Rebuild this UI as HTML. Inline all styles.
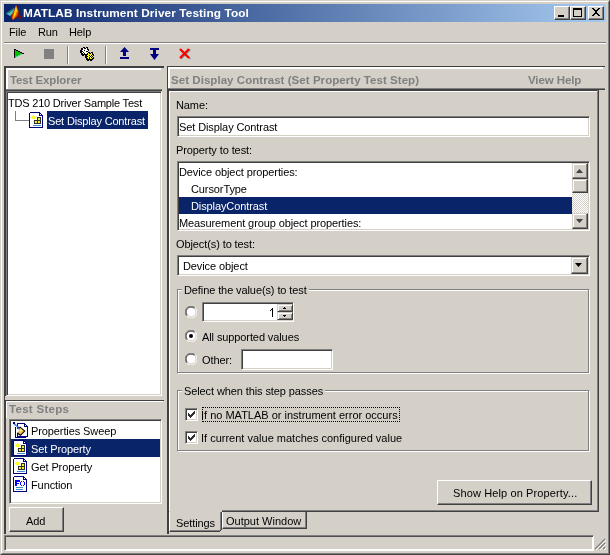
<!DOCTYPE html>
<html><head><meta charset="utf-8">
<style>
*{box-sizing:border-box}
html,body{margin:0;padding:0}
body{width:610px;height:555px;overflow:hidden;background:#d4d0c8;position:relative;font-family:"Liberation Sans",sans-serif;font-size:11px;color:#000}
.a{position:absolute}
.t{position:absolute;white-space:nowrap;line-height:13px;font-size:11px;letter-spacing:-0.1px}
.b{font-weight:bold}
.g{color:#808080}
.sunk{position:absolute;background:#fff;border:1px solid;border-color:#808080 #fff #fff #808080;box-shadow:inset 1px 1px 0 #404040,inset -1px -1px 0 #d4d0c8}
.rais{position:absolute;background:#d4d0c8;border:1px solid;border-color:#fff #404040 #404040 #fff;box-shadow:inset -1px -1px 0 #808080}
.etch{position:absolute;border:1px solid;border-color:#808080 #fff #fff #808080;box-shadow:inset -1px -1px 0 #808080,inset 1px 1px 0 #fff}
.sel{position:absolute;background:#0a246a}
.w{color:#fff}
.nolcd{will-change:transform}
</style></head><body><div class="nolcd" style="position:absolute;left:0;top:0;width:610px;height:555px">

<!-- window frame -->
<div class="a" style="left:0;top:0;width:610px;height:555px;border:1px solid;border-color:#d4d0c8 #404040 #404040 #d4d0c8"></div>
<div class="a" style="left:1px;top:1px;width:608px;height:553px;border:1px solid;border-color:#fff #808080 #808080 #fff"></div>

<!-- title bar -->
<div class="a" style="left:4px;top:4px;width:602px;height:18px;background:linear-gradient(to right,#0a246a,#a6caf0)"></div>
<svg class="a" style="left:6px;top:5px" width="16" height="16" viewBox="0 0 16 16">
  <polygon points="0,8.5 8,3 9.5,6.5 4,11" fill="#50c0b8"/>
  <polygon points="0,8.5 8,3 8.6,4.2 1.2,9" fill="#207878"/>
  <polygon points="10,0 15.5,14 11.5,11.5 6.5,15 5,11 8.5,4.5" fill="#b82000"/>
  <polygon points="10,0 12.5,6.5 10.5,11 7,15 6,12.5 8.5,5.5" fill="#f06000"/>
  <polygon points="10,1 11.2,5.5 9.5,10 7,14.5 8,8.5" fill="#ffd800"/>
  <polygon points="12.5,6.5 15.5,14 16,15 12,12" fill="#701000"/>
</svg>
<div class="t b w" style="left:23px;top:7px;font-size:11.8px;letter-spacing:0.1px">MATLAB Instrument Driver Testing Tool</div>

<!-- caption buttons -->
<div class="rais" style="left:554px;top:6px;width:16px;height:14px"></div>
<div class="a" style="left:558px;top:15px;width:6px;height:2px;background:#000"></div>
<div class="rais" style="left:570px;top:6px;width:16px;height:14px"></div>
<div class="a" style="left:573px;top:8px;width:9px;height:9px;border:1px solid #000;border-top-width:2px"></div>
<div class="rais" style="left:588px;top:6px;width:16px;height:14px"></div>
<svg class="a" style="left:588px;top:5px" width="16" height="14" viewBox="0 0 16 14">
  <path d="M4,3h2v1h1v1h2v-1h1v-1h2v1h-1v1h-1v1h-1v2h1v1h1v1h1v1h-2v-1h-1v-1h-2v1h-1v1h-2v-1h1v-1h1v-1h1v-2h-1v-1h-1v-1h-1z" fill="#000"/>
</svg>

<!-- menu -->
<div class="t" style="left:9px;top:26px">File</div>
<div class="t" style="left:38px;top:26px">Run</div>
<div class="t" style="left:69px;top:26px">Help</div>
<div class="a" style="left:4px;top:42px;width:602px;height:1px;background:#808080"></div>
<div class="a" style="left:4px;top:43px;width:602px;height:1px;background:#fff"></div>

<!-- toolbar -->
<svg class="a" style="left:14px;top:49px" width="10" height="9" viewBox="0 0 10 9" shape-rendering="crispEdges">
  <path d="M0,0h2v1h-1v8h-1z M2,1h2v1h-2z M4,2h2v1h-2z M6,3h2v1h-2z M8,4h2v1h-2z" fill="#000"/>
  <path d="M1,1h1v1h2v1h2v1h2v1h-2v1h-2v1h-2v1h-1z" fill="#00c000"/>
  <path d="M6,5h2v1h-2z M4,6h2v1h-2z M2,7h2v1h-2z M1,8h1v1h-1z" fill="#30e890"/>
</svg>
<div class="a" style="left:44px;top:49px;width:10px;height:10px;background:#808080"></div>
<div class="a" style="left:67px;top:46px;width:1px;height:18px;background:#808080"></div>
<div class="a" style="left:68px;top:46px;width:1px;height:18px;background:#fff"></div>
<svg class="a" style="left:78px;top:45px" width="19" height="18" viewBox="0 0 19 18" shape-rendering="crispEdges">
  <path d="M5,2h2v1h1v-1h2v2h1v2h-1v1h1v2h-1v1h-1v1h-2v-1h-1v1h-2v-1h-1v-2h-1v-3h1v-2h2z" fill="#000"/>
  <path d="M5,3h1v1h2v-1h1v2h1v1h-1v1h1v1h-1v1h-2v-1h-1v1h-1v-1h-1v-1h1v-1h-1v-1h1z" fill="#fff"/>
  <path d="M6,5h1v1h-1z M8,6h1v1h-1z M5,7h1v1h-1z" fill="#000"/>
  <path d="M10,7h2v1h1v-1h2v2h1v2h-1v1h1v2h-1v1h-1v1h-2v-1h-1v1h-2v-1h-1v-2h-1v-2h1v-2h2z" fill="#000"/>
  <path d="M10,8h1v1h2v-1h1v2h1v1h-1v1h1v1h-1v1h-2v-1h-1v1h-1v-1h-1v-1h1v-1h-1v-1h1z" fill="#ffff00"/>
  <path d="M11,10h1v1h-1z M13,10h1v1h-1z M12,11h1v1h-1z M11,12h1v1h-1z M13,12h1v1h-1z" fill="#000"/>
  <path d="M12,10h1v1h-1z M12,12h1v1h-1z" fill="#fff"/>
</svg>
<div class="a" style="left:105px;top:46px;width:1px;height:18px;background:#808080"></div>
<div class="a" style="left:106px;top:46px;width:1px;height:18px;background:#fff"></div>
<svg class="a" style="left:120px;top:47px" width="9" height="12" viewBox="0 0 9 12">
  <polygon points="4.5,0 9,5 6,5 6,9 3,9 3,5 0,5" fill="#000080"/>
  <rect x="0" y="10" width="9" height="2" fill="#000080"/>
</svg>
<svg class="a" style="left:150px;top:48px" width="9" height="13" viewBox="0 0 9 13">
  <rect x="0" y="0" width="9" height="2" fill="#000080"/>
  <polygon points="3,2 6,2 6,6 9,6 4.5,12 0,6 3,6" fill="#000080"/>
</svg>
<svg class="a" style="left:178px;top:47px" width="14" height="14" viewBox="0 0 14 14">
  <path d="M3,2.5 L12.5,12 M12.5,2.5 L3,12" stroke="#709090" stroke-width="1.2"/>
  <path d="M2,1.5 L11,10.5 M11,1.5 L2,10.5" stroke="#ff0000" stroke-width="2.3" transform="translate(0,0.5)"/>
</svg>

<!-- LEFT COLUMN -->
<div class="a" style="left:4px;top:66px;width:2px;height:330px;background:#404040"></div>
<div class="a" style="left:4px;top:396px;width:1px;height:138px;background:#404040"></div>
<!-- test explorer header -->
<div class="a" style="left:4px;top:66px;width:160px;height:2px;background:#404040"></div>
<div class="a" style="left:6px;top:68px;width:155px;height:2px;background:#fff"></div>
<div class="a" style="left:6px;top:68px;width:2px;height:21px;background:#fff"></div>
<div class="t b g" style="left:10px;top:74px;font-size:11.5px">Test Explorer</div>
<!-- tree pane -->
<div class="a" style="left:6px;top:89px;width:156px;height:1px;background:#808080"></div>
<div class="a" style="left:6px;top:90px;width:156px;height:1px;background:#404040"></div>
<div class="sunk" style="left:6px;top:91px;width:156px;height:305px"></div>
<div class="t" style="left:8px;top:97px;letter-spacing:-0.2px">TDS 210 Driver Sample Test</div>
<div class="a" style="left:15px;top:111px;width:1px;height:10px;background:#808080"></div>
<div class="a" style="left:15px;top:120px;width:14px;height:1px;background:#808080"></div>
<svg class="a" style="left:29px;top:112px" width="15" height="17" viewBox="0 0 15 17" shape-rendering="crispEdges">
  <path d="M1,1 H10 L13,4 V16 H1 Z" fill="#fff"/>
  <path d="M0.5,0.5 H10.5 M10.5,0.5 L13.5,3.5 M13.5,3.5 V15.5 H0.5 V0.5" fill="none" stroke="#000080" stroke-width="1.3"/>
  <path d="M10.5,0.5 V3.5 H13.5" fill="none" stroke="#000080" stroke-width="1"/>
    <path d="M4,3h1v1h1v1h1v1h-1v1h-1v1h-1v-1h-1v-1h-1v-1h1v-1h1z" fill="#ffff20"/>
  <path d="M8,5h4v7h-7v-4h3z" fill="#303030"/>
  <rect x="9" y="6" width="2" height="2" fill="#f0f030"/>
  <rect x="6" y="9" width="2" height="2" fill="#f0f030"/>
  <rect x="9" y="9" width="2" height="2" fill="#f0f030"/>
  <rect x="4" y="13" width="8" height="1" fill="#3a90c8"/>
</svg>
<div class="sel" style="left:47px;top:111px;width:101px;height:18px"></div>
<div class="t w" style="left:48px;top:115px;letter-spacing:-0.17px">Set Display Contrast</div>

<!-- test steps -->
<div class="a" style="left:4px;top:400px;width:160px;height:1px;background:#404040"></div>
<div class="a" style="left:6px;top:401px;width:157px;height:1px;background:#fff"></div>
<div class="a" style="left:5px;top:400px;width:1px;height:134px;background:#404040"></div>
<div class="a" style="left:6px;top:401px;width:1px;height:17px;background:#fff"></div>
<div class="t b g" style="left:9px;top:403px;font-size:11.5px;letter-spacing:0.3px">Test Steps</div>
<div class="sunk" style="left:9px;top:419px;width:153px;height:85px"></div>
<div class="sel" style="left:11px;top:439px;width:149px;height:18px"></div>
<div class="t" style="left:31px;top:425px">Properties Sweep</div>
<div class="t w" style="left:31px;top:443px">Set Property</div>
<div class="t" style="left:31px;top:461px">Get Property</div>
<div class="t" style="left:31px;top:479px">Function</div>
<div class="rais" style="left:9px;top:507px;width:55px;height:25px"></div>
<div class="t" style="left:26px;top:515px">Add</div>

<!-- RIGHT PANEL -->
<div class="a" style="left:167px;top:66px;width:1px;height:468px;background:#404040"></div>
<div class="a" style="left:167px;top:66px;width:438px;height:1px;background:#404040"></div>
<div class="a" style="left:168px;top:67px;width:435px;height:2px;background:#fff"></div>
<div class="a" style="left:168px;top:67px;width:2px;height:21px;background:#fff"></div>
<div class="a" style="left:168px;top:88px;width:437px;height:1px;background:#808080"></div>
<div class="a" style="left:167px;top:89px;width:438px;height:1px;background:#404040"></div>
<div class="t b g" style="left:171px;top:74px;font-size:11.5px;letter-spacing:0.05px">Set Display Contrast (Set Property Test Step)</div>
<div class="t b g" style="left:528px;top:74px;font-size:11.5px">View Help</div>
<!-- tab content border -->
<div class="a" style="left:168px;top:90px;width:1px;height:444px;background:#404040"></div>
<div class="a" style="left:169px;top:91px;width:1px;height:420px;background:#fff"></div>
<div class="a" style="left:168px;top:90px;width:430px;height:1px;background:#404040"></div>
<div class="a" style="left:169px;top:91px;width:428px;height:1px;background:#fff"></div>
<div class="a" style="left:597px;top:90px;width:1px;height:421px;background:#808080"></div>
<div class="a" style="left:598px;top:90px;width:1px;height:422px;background:#404040"></div>
<div class="a" style="left:222px;top:510px;width:376px;height:1px;background:#808080"></div>
<div class="a" style="left:222px;top:511px;width:377px;height:1px;background:#404040"></div>

<div class="t" style="left:176px;top:99px">Name:</div>
<div class="sunk" style="left:177px;top:116px;width:413px;height:21px"></div>
<div class="t" style="left:179px;top:121px">Set Display Contrast</div>

<div class="t" style="left:176px;top:144px">Property to test:</div>
<div class="sunk" style="left:177px;top:161px;width:413px;height:70px;overflow:hidden"></div>
<div class="sel" style="left:179px;top:197px;width:393px;height:17px"></div>
<div class="t" style="left:179px;top:166px">Device object properties:</div>
<div class="t" style="left:191px;top:183px">CursorType</div>
<div class="t w" style="left:191px;top:200px">DisplayContrast</div>
<div class="t" style="left:179px;top:217px">Measurement group object properties:</div>

<div class="t" style="left:176px;top:238px">Object(s) to test:</div>
<div class="sunk" style="left:177px;top:255px;width:413px;height:21px"></div>
<div class="t" style="left:183px;top:260px">Device object</div>

<div class="etch" style="left:177px;top:289px;width:413px;height:85px"></div>
<div class="t" style="left:182px;top:284px;background:#d4d0c8;padding:0 2px">Define the value(s) to test</div>

<div class="etch" style="left:177px;top:390px;width:413px;height:62px"></div>
<div class="t" style="left:182px;top:385px;background:#d4d0c8;padding:0 2px">Select when this step passes</div>

<div class="rais" style="left:437px;top:480px;width:155px;height:25px"></div>
<div class="t" style="left:453px;top:487px;letter-spacing:0.12px">Show Help on Property...</div>

<!-- status bar -->
<div class="a" style="left:4px;top:535px;width:590px;height:16px;border:1px solid;border-color:#808080 #fff #fff #808080;box-shadow:inset 1px 1px 0 #505050,inset -1px -1px 0 #fff"></div>


<!-- scrollbar for property list -->
<div class="a" style="left:572px;top:163px;width:16px;height:66px;background-color:#fff;background-image:repeating-conic-gradient(#d4d0c8 0 25%,#fff 0 50%);background-size:2px 2px"></div>
<div class="rais" style="left:572px;top:163px;width:16px;height:16px;box-shadow:inset -1px -1px 0 #808080,inset 1px 1px 0 #fff;border-color:#d4d0c8 #404040 #404040 #d4d0c8"></div>
<svg class="a" style="left:576px;top:169px" width="7" height="4" viewBox="0 0 7 4"><polygon points="3.5,0 7,4 0,4" fill="#404040"/></svg>
<div class="rais" style="left:572px;top:179px;width:16px;height:14px;box-shadow:inset -1px -1px 0 #808080,inset 1px 1px 0 #fff;border-color:#d4d0c8 #404040 #404040 #d4d0c8"></div>
<div class="rais" style="left:572px;top:213px;width:16px;height:16px;box-shadow:inset -1px -1px 0 #808080,inset 1px 1px 0 #fff;border-color:#d4d0c8 #404040 #404040 #d4d0c8"></div>
<svg class="a" style="left:576px;top:219px" width="7" height="4" viewBox="0 0 7 4"><polygon points="0,0 7,0 3.5,4" fill="#404040"/></svg>

<!-- combo button -->
<div class="rais" style="left:571px;top:257px;width:17px;height:17px;box-shadow:inset -1px -1px 0 #808080,inset 1px 1px 0 #fff;border-color:#d4d0c8 #404040 #404040 #d4d0c8"></div>
<svg class="a" style="left:575px;top:263px" width="7" height="4" viewBox="0 0 7 4"><polygon points="0,0 7,0 3.5,4" fill="#000"/></svg>

<!-- radios -->
<svg class="a" style="left:185px;top:306px" width="12" height="12" viewBox="0 0 12 12">
  <circle cx="6" cy="6" r="5" fill="#fff"/>
  <path d="M10.2,1.8 A5.5,5.5 0 0 0 1.8,10.2" fill="none" stroke="#808080" stroke-width="1"/>
  <path d="M9.5,2.5 A4.5,4.5 0 0 0 2.5,9.5" fill="none" stroke="#404040" stroke-width="1"/>
  <path d="M1.8,10.2 A5.5,5.5 0 0 0 10.2,1.8" fill="none" stroke="#fff" stroke-width="1"/>
  <path d="M2.5,9.5 A4.5,4.5 0 0 0 9.5,2.5" fill="none" stroke="#d4d0c8" stroke-width="1"/>
</svg>
<svg class="a" style="left:185px;top:330px" width="12" height="12" viewBox="0 0 12 12">
  <circle cx="6" cy="6" r="5" fill="#fff"/>
  <path d="M10.2,1.8 A5.5,5.5 0 0 0 1.8,10.2" fill="none" stroke="#808080" stroke-width="1"/>
  <path d="M9.5,2.5 A4.5,4.5 0 0 0 2.5,9.5" fill="none" stroke="#404040" stroke-width="1"/>
  <path d="M1.8,10.2 A5.5,5.5 0 0 0 10.2,1.8" fill="none" stroke="#fff" stroke-width="1"/>
  <path d="M2.5,9.5 A4.5,4.5 0 0 0 9.5,2.5" fill="none" stroke="#d4d0c8" stroke-width="1"/>
  <circle cx="6" cy="6" r="2" fill="#000"/>
</svg>
<svg class="a" style="left:185px;top:353px" width="12" height="12" viewBox="0 0 12 12">
  <circle cx="6" cy="6" r="5" fill="#fff"/>
  <path d="M10.2,1.8 A5.5,5.5 0 0 0 1.8,10.2" fill="none" stroke="#808080" stroke-width="1"/>
  <path d="M9.5,2.5 A4.5,4.5 0 0 0 2.5,9.5" fill="none" stroke="#404040" stroke-width="1"/>
  <path d="M1.8,10.2 A5.5,5.5 0 0 0 10.2,1.8" fill="none" stroke="#fff" stroke-width="1"/>
  <path d="M2.5,9.5 A4.5,4.5 0 0 0 9.5,2.5" fill="none" stroke="#d4d0c8" stroke-width="1"/>
</svg>
<!-- spinner -->
<div class="sunk" style="left:202px;top:302px;width:92px;height:20px"></div>
<div class="a" style="left:272px;top:308px;width:1px;height:9px;background:#000"></div><div class="a" style="left:271px;top:309px;width:1px;height:1px;background:#000"></div><div class="a" style="left:270px;top:310px;width:1px;height:1px;background:#000"></div>
<div class="rais" style="left:277px;top:304px;width:16px;height:8px;border-color:#d4d0c8 #404040 #404040 #d4d0c8;box-shadow:inset 1px 1px 0 #fff,inset -1px -1px 0 #808080"></div>
<div class="rais" style="left:277px;top:312px;width:16px;height:8px;border-color:#d4d0c8 #404040 #404040 #d4d0c8;box-shadow:inset 1px 1px 0 #fff,inset -1px -1px 0 #808080"></div>
<div class="a" style="left:284px;top:307px;width:1px;height:1px;background:#000"></div><div class="a" style="left:283px;top:308px;width:3px;height:1px;background:#000"></div>
<div class="a" style="left:283px;top:315px;width:3px;height:1px;background:#000"></div><div class="a" style="left:284px;top:316px;width:1px;height:1px;background:#000"></div>
<div class="t" style="left:202px;top:331px">All supported values</div>
<div class="t" style="left:202px;top:354px">Other:</div>
<div class="sunk" style="left:241px;top:349px;width:92px;height:21px"></div>

<!-- checkboxes -->
<div class="sunk" style="left:185px;top:408px;width:13px;height:13px"></div>
<svg class="a" style="left:188px;top:411px" width="7" height="7" viewBox="0 0 7 7"><path d="M0,2h1v1h1v1h1v-1h1v-1h1v-1h1v-1h1v3h-1v1h-1v1h-1v1h-1v1h-1v-1h-1v-1h-1z" fill="#303030"/></svg>
<div class="sunk" style="left:185px;top:431px;width:13px;height:13px"></div>
<svg class="a" style="left:188px;top:434px" width="7" height="7" viewBox="0 0 7 7"><path d="M0,2h1v1h1v1h1v-1h1v-1h1v-1h1v-1h1v3h-1v1h-1v1h-1v1h-1v1h-1v-1h-1v-1h-1z" fill="#303030"/></svg>
<div class="a" style="left:202px;top:407px;width:198px;height:15px;border:1px dotted #000"></div>
<div class="t" style="left:201px;top:409px;letter-spacing:0">If no MATLAB or instrument error occurs</div>
<div class="t" style="left:201px;top:432px;letter-spacing:0">If current value matches configured value</div>

<!-- tabs -->
<div class="a" style="left:169px;top:512px;width:53px;height:20px;background:#d4d0c8;border-left:1px solid #fff;border-right:1px solid #404040;border-bottom:1px solid #404040;box-shadow:inset -1px -1px 0 #808080"></div>
<div class="a" style="left:220px;top:530px;width:2px;height:2px;background:#d4d0c8"></div>
<div class="a" style="left:220px;top:530px;width:1px;height:1px;background:#404040"></div>
<div class="t" style="left:176px;top:517px">Settings</div>
<div class="a" style="left:222px;top:512px;width:85px;height:17px;border-left:1px solid #fff;border-right:1px solid #404040;border-bottom:1px solid #404040;box-shadow:inset -1px -1px 0 #808080"></div>
<div class="t" style="left:226px;top:515px;letter-spacing:0">Output Window</div>
<!-- resize grip -->
<svg class="a" style="left:594px;top:538px" width="12" height="12" viewBox="0 0 12 12">
  <path d="M11,1 L1,11 M11,5 L5,11 M11,9 L9,11" stroke="#808080" stroke-width="1.2"/>
  <path d="M12,2 L2,12 M12,6 L6,12 M12,10 L10,12" stroke="#fff" stroke-width="1"/>
</svg>

<!-- list icons -->
<svg class="a" style="left:13px;top:422px" width="17" height="17" viewBox="0 0 17 17" shape-rendering="crispEdges">
  <path d="M4.5,1.5 H11.5 L14.5,4.5 V14.5 H4.5 Z" fill="#fff" stroke="#000080" stroke-width="1.2"/>
  <path d="M11.5,1.5 V4.5 H14.5" fill="none" stroke="#000080" stroke-width="1"/>
  <path d="M2.5,5 V15.5 H13" fill="none" stroke="#000080" stroke-width="1.2"/>
  <path d="M1,1.5 L6,6" stroke="#3878ff" stroke-width="1.6" shape-rendering="auto"/>
  <rect x="0" y="0" width="2" height="2" fill="#000080"/>
  <polygon points="4,6.5 7,4.5 12.5,9 7.5,14 4.5,12" fill="#000" shape-rendering="auto"/>
  <polygon points="5,7 7,5.7 11,9 7.5,12.5 5.3,11" fill="#f0c848" shape-rendering="auto"/>
  <polygon points="7,7 9,8 8,10 6.5,9" fill="#f8f080" shape-rendering="auto"/>
  <polygon points="4,7 6,6.5 5.5,10 4,11" fill="#fff" shape-rendering="auto"/>
  <polygon points="5,5.5 7,5.5 6,8" fill="#2050e0" shape-rendering="auto"/>
</svg>
<svg class="a" style="left:13px;top:440px" width="15" height="17" viewBox="0 0 15 17" shape-rendering="crispEdges">
  <path d="M1,1 H10 L13,4 V16 H1 Z" fill="#fff"/>
  <path d="M0.5,0.5 H10.5 M10.5,0.5 L13.5,3.5 M13.5,3.5 V15.5 H0.5 V0.5" fill="none" stroke="#000080" stroke-width="1.3"/>
  <path d="M10.5,0.5 V3.5 H13.5" fill="none" stroke="#000080" stroke-width="1"/>
    <path d="M4,3h1v1h1v1h1v1h-1v1h-1v1h-1v-1h-1v-1h-1v-1h1v-1h1z" fill="#ffff20"/>
  <path d="M8,5h4v7h-7v-4h3z" fill="#303030"/>
  <rect x="9" y="6" width="2" height="2" fill="#f0f030"/>
  <rect x="6" y="9" width="2" height="2" fill="#f0f030"/>
  <rect x="9" y="9" width="2" height="2" fill="#f0f030"/>
  <rect x="4" y="13" width="8" height="1" fill="#3a90c8"/>
</svg>
<svg class="a" style="left:13px;top:458px" width="15" height="17" viewBox="0 0 15 17" shape-rendering="crispEdges">
  <path d="M1,1 H10 L13,4 V16 H1 Z" fill="#fff"/>
  <path d="M0.5,0.5 H10.5 M10.5,0.5 L13.5,3.5 M13.5,3.5 V15.5 H0.5 V0.5" fill="none" stroke="#000080" stroke-width="1.3"/>
  <path d="M10.5,0.5 V3.5 H13.5" fill="none" stroke="#000080" stroke-width="1"/>
    <path d="M4,3h1v1h1v1h1v1h-1v1h-1v1h-1v-1h-1v-1h-1v-1h1v-1h1z" fill="#ffff20"/>
  <path d="M8,5h4v7h-7v-4h3z" fill="#303030"/>
  <rect x="9" y="6" width="2" height="2" fill="#f0f030"/>
  <rect x="6" y="9" width="2" height="2" fill="#f0f030"/>
  <rect x="9" y="9" width="2" height="2" fill="#f0f030"/>
  <rect x="4" y="13" width="8" height="1" fill="#3a90c8"/>
</svg>
<svg class="a" style="left:13px;top:476px" width="15" height="17" viewBox="0 0 15 17" shape-rendering="crispEdges">
  <path d="M1,1 H10 L13,4 V16 H1 Z" fill="#fff"/>
  <path d="M0.5,0.5 H10.5 M10.5,0.5 L13.5,3.5 M13.5,3.5 V15.5 H0.5 V0.5" fill="none" stroke="#000080" stroke-width="1.3"/>
  <path d="M10.5,0.5 V3.5 H13.5" fill="none" stroke="#000080" stroke-width="1"/>
    <path d="M2,4h5v2h-3v1h2v1h-2v2h-2z" fill="#0000ff"/>
  <path d="M8,5h1v1h-1z M7,6h1v3h-1z M8,9h1v1h-1z M10,5h1v1h-1z M11,6h1v3h-1z M10,9h1v1h-1z" fill="#0000ff"/>
  <rect x="3" y="11" width="7" height="1" fill="#3a90c8"/>
  <rect x="3" y="13" width="7" height="1" fill="#3a90c8"/>
</svg>
</div></body></html>
